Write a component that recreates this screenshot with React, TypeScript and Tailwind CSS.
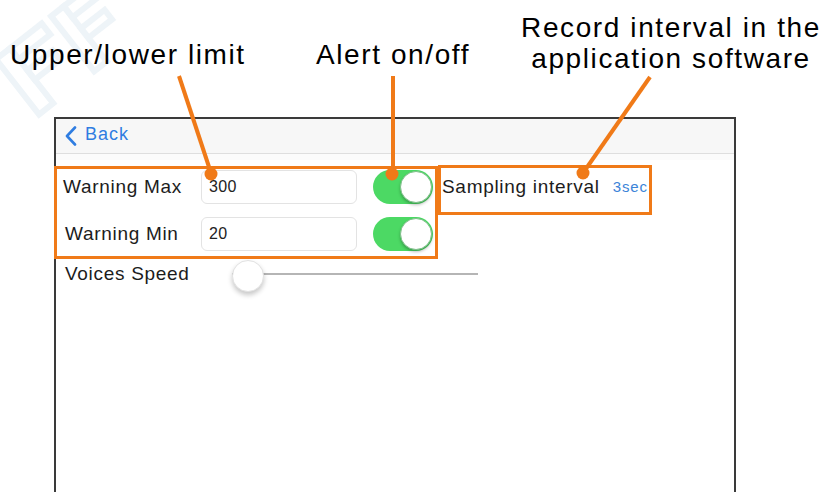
import React from "react";

function Toggle() {
  return (
    <div className="relative w-[60px] h-[34px] rounded-full bg-[#4cd964] shrink-0">
      <div className="absolute right-[1px] top-[1px] w-[32px] h-[32px] rounded-full bg-white border border-[#7fbf8a] shadow-[0_2px_3px_rgba(0,0,0,0.25)]" />
    </div>
  );
}

function Field({ value }: { value: string }) {
  return (
    <div className="w-[156px] h-[34px] rounded-[6px] border border-[#e3e3e3] flex items-center pl-[7px] text-[16px] text-[#222] tracking-[0.4px] shrink-0">
      {value}
    </div>
  );
}

export default function App() {
  const orange = "#f07a18";
  return (
    <div
      className="relative w-[827px] h-[492px] bg-white overflow-hidden flex flex-col"
      style={{ fontFamily: '"Liberation Sans", Arial, sans-serif' }}
    >
      {/* faint watermark drawing */}
      <svg className="absolute left-0 top-0 pointer-events-none" width="140" height="140" viewBox="0 0 140 140">
        <g fill="none" stroke="#eef4f8" strokeWidth="6" transform="rotate(-38 60 60)">
          <rect x="10" y="20" width="18" height="70" />
          <rect x="28" y="20" width="40" height="14" />
          <rect x="28" y="48" width="32" height="12" />
          <rect x="80" y="20" width="16" height="70" />
          <rect x="96" y="20" width="38" height="14" />
          <rect x="96" y="48" width="30" height="12" />
        </g>
      </svg>

      {/* annotation labels */}
      <div className="relative h-[117px] shrink-0 text-black text-[28px] leading-[31px] tracking-[1.6px]">
        <div className="absolute left-[10px] top-[39px]">Upper/lower limit</div>
        <div className="absolute left-[316px] top-[39px]">Alert on/off</div>
        <div className="absolute left-[520px] top-[12px] w-[302px] text-center">
          Record interval in the
          <br />
          application software
        </div>
      </div>

      {/* device screen */}
      <div className="ml-[54px] w-[682px] flex-1 border-2 border-b-0 border-[#3a3a3a] flex flex-col">
        <div className="h-[35px] bg-[#f7f7f7] border-b border-[#dedede] flex items-center pl-[9px] gap-[8px] text-[#2f7de1]">
          <svg width="12" height="20" viewBox="0 0 12 20" fill="none">
            <path d="M10 1.5 L2 10 L10 18.5" stroke="#2f7de1" strokeWidth="2.6" strokeLinecap="round" strokeLinejoin="round" />
          </svg>
          <span className="text-[18px] tracking-[1px] mt-[-3px]">Back</span>
        </div>
        <div className="h-[6px] bg-[#fbfbfb]" />

        <div className="flex flex-col text-[19px] text-[#1c1c1c] tracking-[0.7px]">
          <div className="flex items-center h-[34px] mt-[10px] pl-[7px]">
            <div className="w-[138px]">Warning Max</div>
            <Field value="300" />
            <div className="w-[16px]" />
            <Toggle />
            <div className="ml-[9px]">Sampling interval</div>
            <div className="ml-[13px] text-[15px] text-[#3c84d8] tracking-[0.9px] mt-[1px]">3sec</div>
          </div>
          <div className="flex items-center h-[34px] mt-[13px] pl-[9px]">
            <div className="w-[136px]">Warning Min</div>
            <Field value="20" />
            <div className="w-[16px]" />
            <Toggle />
          </div>
          <div className="flex items-center h-[30px] mt-[8px] pl-[9px]">
            <div className="w-[167px]">Voices Speed</div>
            <div className="relative w-[246px] h-[30px] flex items-center">
              <div className="w-full h-[2px] bg-[#b5b5b5]" />
              <div className="absolute left-0 top-[1px] w-[32px] h-[32px] rounded-full bg-white border border-[#e2e2e2] shadow-[0_3px_5px_rgba(0,0,0,0.22)]" />
            </div>
          </div>
        </div>
      </div>

      {/* annotation overlay */}
      <svg className="absolute inset-0 pointer-events-none" width="827" height="492" viewBox="0 0 827 492">
        <rect x="55.5" y="167.5" width="381" height="90" fill="none" stroke={orange} strokeWidth="3" />
        <rect x="439.5" y="166.5" width="211" height="47" fill="none" stroke={orange} strokeWidth="3" />
        <line x1="179" y1="76" x2="211" y2="173" stroke={orange} strokeWidth="4" />
        <line x1="393" y1="76" x2="393" y2="173" stroke={orange} strokeWidth="4" />
        <line x1="650" y1="77" x2="583" y2="173" stroke={orange} strokeWidth="4" />
        <circle cx="211" cy="174" r="6.5" fill={orange} />
        <circle cx="392" cy="174" r="6.5" fill={orange} />
        <circle cx="583" cy="173" r="6.5" fill={orange} />
      </svg>
    </div>
  );
}
